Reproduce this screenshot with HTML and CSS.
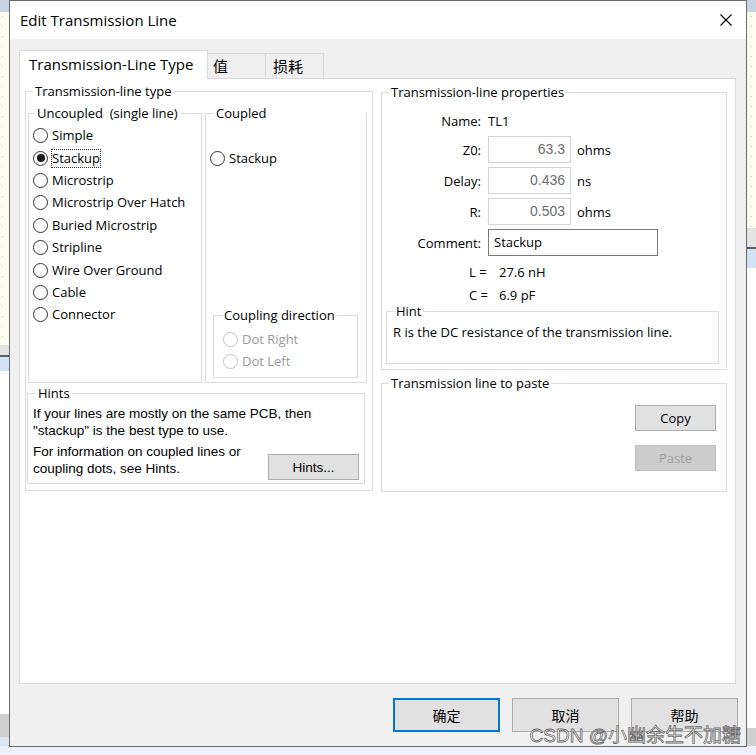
FILE: index.html
```html
<!DOCTYPE html>
<html lang="en">
<head>
<meta charset="utf-8">
<title>Edit Transmission Line</title>
<link rel="stylesheet" href="styles.css">
</head>
<body>
<div class="dialog">
  <div class="titlebar">
    <span class="title">Edit Transmission Line</span>
    <svg class="close" width="12" height="12" viewBox="0 0 12 12"><path d="M0.5 0.5L11.5 11.5M11.5 0.5L0.5 11.5" stroke="#000" stroke-width="1.1" fill="none"/></svg>
  </div>
  <div class="client">
    <div class="tabs">
      <div class="tab active">Transmission-Line Type</div>
      <div class="tab cjk t2">值</div>
      <div class="tab cjk t3">损耗</div>
    </div>
    <div class="panel">
      <div class="group g-type">
        <div class="legend lg-type">Transmission-line type</div>
        <div class="type-row">
          <div class="group g-unc">
            <div class="legend lg-unc">Uncoupled&nbsp; (single line)</div>
            <div class="radios">
              <div class="radio"><span class="circle"></span><span class="rl">Simple</span></div>
              <div class="radio checked"><span class="circle"></span><span class="rl focus">Stackup</span></div>
              <div class="radio"><span class="circle"></span><span class="rl">Microstrip</span></div>
              <div class="radio"><span class="circle"></span><span class="rl">Microstrip Over Hatch</span></div>
              <div class="radio"><span class="circle"></span><span class="rl">Buried Microstrip</span></div>
              <div class="radio"><span class="circle"></span><span class="rl">Stripline</span></div>
              <div class="radio"><span class="circle"></span><span class="rl">Wire Over Ground</span></div>
              <div class="radio"><span class="circle"></span><span class="rl">Cable</span></div>
              <div class="radio"><span class="circle"></span><span class="rl">Connector</span></div>
            </div>
          </div>
          <div class="group g-cpl">
            <div class="legend lg-cpl">Coupled</div>
            <div class="radios cpl-radios">
              <div class="radio"><span class="circle"></span><span class="rl">Stackup</span></div>
            </div>
            <div class="group g-dir">
              <div class="legend lg-dir">Coupling direction</div>
              <div class="dir-radios">
                <div class="radio disabled"><span class="circle"></span><span class="rl">Dot Right</span></div>
                <div class="radio disabled"><span class="circle"></span><span class="rl">Dot Left</span></div>
              </div>
            </div>
          </div>
        </div>
        <div class="group g-hints">
          <div class="legend lg-hints">Hints</div>
          <p class="hint-p p1">If your lines are mostly on the same PCB, then<br>"stackup" is the best type to use.</p>
          <div class="hint-row">
            <p class="hint-p p2">For information on coupled lines or<br>coupling dots, see Hints.</p>
            <button class="btn btn-hints">Hints...</button>
          </div>
        </div>
      </div>

      <div class="right-col">
        <div class="group g-props">
          <div class="legend lg-props">Transmission-line properties</div>
          <div class="props">
            <div class="lbl">Name:</div><div class="val">TL1</div>
            <div class="lbl">Z0:</div><div class="val"><div class="num">63.3</div><span class="unit">ohms</span></div>
            <div class="lbl">Delay:</div><div class="val"><div class="num">0.436</div><span class="unit">ns</span></div>
            <div class="lbl">R:</div><div class="val"><div class="num">0.503</div><span class="unit">ohms</span></div>
            <div class="lbl">Comment:</div><div class="val"><div class="comment">Stackup</div></div>
          </div>
          <div class="lc">
            <div class="lc-row"><span class="lc-k">L =</span><span>27.6 nH</span></div>
            <div class="lc-row"><span class="lc-k">C =</span><span>6.9 pF</span></div>
          </div>
          <div class="group g-hint">
            <div class="legend lg-hint">Hint</div>
            <p class="hint-text">R is the DC resistance of the transmission line.</p>
          </div>
        </div>
        <div class="group g-paste">
          <div class="legend lg-paste">Transmission line to paste</div>
          <div class="paste-btns">
            <button class="btn btn-copy">Copy</button>
            <button class="btn btn-paste" disabled>Paste</button>
          </div>
        </div>
      </div>
    </div>
    <div class="footer">
      <button class="btn fbtn default cjk">确定</button>
      <button class="btn fbtn cjk">取消</button>
      <button class="btn fbtn cjk">帮助</button>
    </div>
  </div>
  <div class="watermark">CSDN @小幽余生不加糖</div>
</div>
</body>
</html>
```

FILE: styles.css
```css
html, body {
  margin: 0;
  padding: 0;
}

body {
  width: 756px;
  height: 755px;
  overflow: hidden;
  background-color: #eef0fb;
  background-image:
    repeating-linear-gradient(to bottom, #c9c9b4 0 1px, transparent 1px 10px),
    repeating-linear-gradient(to bottom, #c9c9b4 0 1px, transparent 1px 10px),
    linear-gradient(to bottom, #c6d3e3 0 12px, #fdfdef 12px 345px, #e3e3e3 345px 355px, #5f5f5f 355px 357px, #d3e2f4 357px 371px, #ffffff 371px 714px, #d0d0d0 714px 737px, #dbe6f5 737px 746px, #eef0fb 746px),
    linear-gradient(to bottom, #c6d3e3 0 12px, #fdfdef 12px 228px, #e3e3e3 228px 247px, #5f5f5f 247px 249px, #d3e2f4 249px 268px, #ffffff 268px 728px, #d0d0d0 728px 746px, #eef0fb 746px);
  background-size: 1px 330px, 1px 212px, 9px 100%, 9px 100%;
  background-position: 2px 16px, 751px 16px, left top, right top;
  background-repeat: no-repeat;
  font-family: "Open Sans", "Noto Sans", sans-serif;
  font-size: 13px;
  color: #000;
}

.cjk {
  font-family: "Noto Sans CJK SC", "Noto Sans", sans-serif;
}

.dialog {
  position: relative;
  margin-left: 9px;
  width: 738px;
  height: 747px;
  box-sizing: border-box;
  border: 1px solid #6a6a6a;
  background: #f0f0f0;
  display: flex;
  flex-direction: column;
}

.titlebar {
  height: 38px;
  flex: none;
  background: #fff;
  display: flex;
  align-items: center;
  justify-content: space-between;
  padding: 0 14px 0 10px;
}

.title {
  font-size: 15px;
  line-height: 20px;
}

.close {
  display: block;
}

.client {
  flex: 1;
  padding: 11px 10px 14px 9px;
  display: flex;
  flex-direction: column;
}

/* tabs */
.tabs {
  height: 28px;
  display: flex;
  align-items: flex-end;
  flex: none;
}

.tab {
  box-sizing: border-box;
  border: 1px solid #d9d9d9;
  border-bottom: none;
  white-space: nowrap;
}

.tab.active {
  position: relative;
  z-index: 1;
  width: 189px;
  height: 29px;
  margin-bottom: -1px;
  background: #fff;
  font-size: 15px;
  line-height: 26px;
  padding-left: 9px;
}

.tab.t2,
.tab.t3 {
  height: 25px;
  width: 58px;
  border-left: none;
  background: #f0f0f0;
  font-size: 15px;
  line-height: 23px;
}

.tab.t2 { padding-left: 5px; }
.tab.t3 { padding-left: 7px; }

.panel {
  height: 606px;
  box-sizing: border-box;
  border: 1px solid #d9d9d9;
  background: #fff;
  padding: 12px 0 0 5px;
  display: flex;
  align-items: flex-start;
  gap: 8px;
}

/* group boxes */
.group {
  box-sizing: border-box;
  border: 1px solid #dcdcdc;
}

.legend {
  display: table;
  margin-top: -9px;
  padding: 0 2px;
  background: #fff;
  line-height: 16px;
  white-space: nowrap;
}

.g-type {
  width: 348px;
  height: 400px;
}

.lg-type { margin-left: 7px; }

.type-row {
  display: flex;
  gap: 3px;
  margin: 14px 0 0 2px;
  height: 270px;
}

.g-unc {
  width: 174px;
  height: 270px;
}

.lg-unc { margin-left: 6px; }

.radios {
  padding-top: 3.5px;
}

.radio {
  display: flex;
  align-items: center;
  height: 22.4px;
  padding-left: 4px;
}

.circle {
  flex: none;
  width: 15px;
  height: 15px;
  box-sizing: border-box;
  border: 1px solid #333;
  border-radius: 50%;
  background: #fff;
  display: flex;
  align-items: center;
  justify-content: center;
}

.radio.checked .circle::after {
  content: "";
  width: 8px;
  height: 8px;
  border-radius: 50%;
  background: #1b1b1b;
}

.rl {
  margin-left: 3px;
  border: 1px dotted transparent;
  line-height: 17px;
  white-space: nowrap;
}

.rl.focus {
  border-color: #333;
}

.radio.disabled .circle {
  border-color: #c4c4c4;
}

.radio.disabled .rl {
  color: #9a9a9a;
}

.g-cpl {
  width: 162px;
  height: 270px;
  display: flex;
  flex-direction: column;
}

.lg-cpl { margin-left: 8px; }

.cpl-radios {
  padding-top: 25.9px;
}

.g-dir {
  width: 145px;
  height: 63px;
  margin: auto 0 4px 7px;
}

.lg-dir { margin-left: 8px; }

.dir-radios {
  padding-top: 5px;
}

.dir-radios .radio {
  height: 22px;
  padding-left: 9px;
}

.g-hints {
  width: 338px;
  height: 91px;
  margin: 10px 0 0 1px;
}

.lg-hints { margin-left: 8px; }

.hint-p {
  margin: 0;
  padding-left: 5px;
  font-family: "Liberation Sans", Arial, sans-serif;
  font-size: 13.5px;
  line-height: 17px;
  white-space: nowrap;
}

.p1 { padding-top: 3.5px; }

.hint-row {
  display: flex;
  align-items: flex-end;
  justify-content: space-between;
  margin-top: 4.5px;
}

.btn {
  box-sizing: border-box;
  border: 1px solid #adadad;
  background: #e1e1e1;
  color: #000;
  margin: 0;
  padding: 0;
  font-family: "Open Sans", "Noto Sans", sans-serif;
  font-size: 13px;
}

.btn-hints {
  width: 91px;
  height: 26px;
  margin: 0 5px -3px 0;
  font-family: "Liberation Sans", Arial, sans-serif;
  font-size: 13.5px;
}

/* right column */
.right-col {
  width: 346px;
  margin-top: 1px;
}

.g-props {
  height: 278px;
}

.lg-props { margin-left: 7px; }

.props {
  display: grid;
  grid-template-columns: 99px 1fr;
  grid-template-rows: 22px repeat(4, 27px);
  column-gap: 7px;
  row-gap: 4px;
  margin-top: 10px;
}

.lbl {
  text-align: right;
  align-self: center;
}

.val {
  display: flex;
  align-items: center;
}

.num {
  box-sizing: border-box;
  width: 83px;
  height: 27px;
  border: 1px solid #d4d4d4;
  text-align: right;
  padding-right: 5px;
  font-family: "Liberation Sans", Arial, sans-serif;
  font-size: 14px;
  line-height: 25px;
  color: #6d6d6d;
}

.unit {
  margin-left: 6px;
}

.comment {
  box-sizing: border-box;
  width: 170px;
  height: 27px;
  border: 1px solid #7a7a7a;
  padding-left: 5px;
  line-height: 25px;
}

.lc {
  margin-top: 4.5px;
  padding-left: 87px;
  line-height: 23px;
}

.lc-row {
  display: flex;
}

.lc-k {
  width: 30px;
  flex: none;
}

.g-hint {
  width: 333px;
  height: 53px;
  margin: 4.5px 0 0 4px;
}

.lg-hint { margin-left: 7px; }

.hint-text {
  margin: 0;
  padding: 3.5px 0 0 6px;
  line-height: 18px;
  white-space: nowrap;
}

.g-paste {
  height: 109px;
  margin-top: 13px;
}

.lg-paste { margin-left: 7px; }

.paste-btns {
  display: flex;
  flex-direction: column;
  align-items: flex-end;
  gap: 14px;
  margin: 14px 10px 0 0;
}

.btn-copy,
.btn-paste {
  width: 81px;
  height: 26px;
}

.btn-paste {
  background: #cccccc;
  border-color: #bfbfbf;
  color: #a0a0a0;
}

/* footer */
.footer {
  display: flex;
  justify-content: flex-end;
  gap: 12px;
  margin: 14px -2px 0 0;
}

.fbtn {
  width: 107px;
  height: 34px;
  font-family: "Noto Sans CJK SC", "Noto Sans", sans-serif;
  font-size: 14px;
}

.fbtn.default {
  border: 2px solid #0078d7;
}

.watermark {
  position: absolute;
  right: 5px;
  bottom: 2px;
  font-family: "Liberation Sans", "Noto Sans CJK SC", sans-serif;
  font-size: 19px;
  line-height: 16px;
  letter-spacing: 0;
  color: rgba(255, 255, 255, 0.92);
  -webkit-text-stroke: 0.8px #6e6e6e;
  white-space: nowrap;
}
```
